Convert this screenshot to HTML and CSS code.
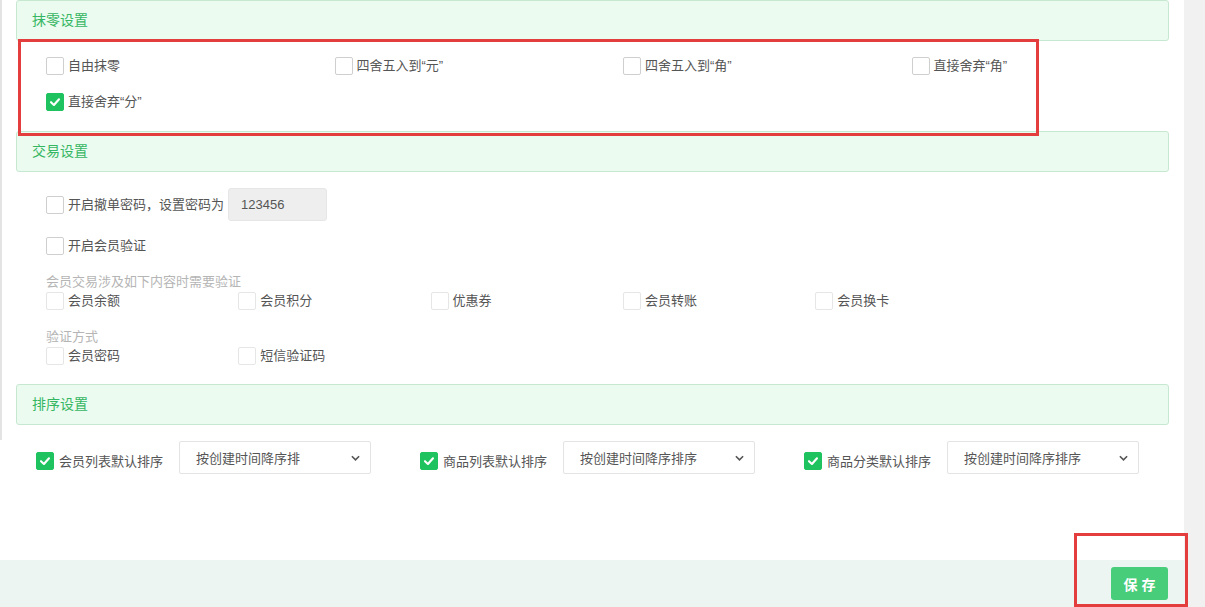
FILE: index.html
```html
<!DOCTYPE html>
<html lang="zh">
<head>
<meta charset="utf-8">
<title>设置</title>
<link rel="stylesheet" href="styles.css">
</head>
<body>
<div class="page">
  <div class="main">
    <div class="panel">
      <div class="sec-head">抹零设置</div>
      <div class="sec-body round">
        <div class="grid4">
          <label class="opt"><span class="cb"></span><span class="txt">自由抹零</span></label>
          <label class="opt"><span class="cb"></span><span class="txt">四舍五入到“元”</span></label>
          <label class="opt"><span class="cb"></span><span class="txt">四舍五入到“角”</span></label>
          <label class="opt"><span class="cb"></span><span class="txt">直接舍弃“角”</span></label>
          <label class="opt"><span class="cb on"><svg viewBox="0 0 18 18"><polyline points="4.5,9.2 7.8,12.3 13.5,6" /></svg></span><span class="txt">直接舍弃“分”</span></label>
        </div>
      </div>

      <div class="sec-head">交易设置</div>
      <div class="sec-body trade">
        <div class="line pwd">
          <label class="opt"><span class="cb"></span><span class="txt">开启撤单密码，设置密码为</span></label>
          <div class="pwd-input">123456</div>
        </div>
        <div class="line verify">
          <label class="opt"><span class="cb"></span><span class="txt">开启会员验证</span></label>
        </div>
        <div class="sub">会员交易涉及如下内容时需要验证</div>
        <div class="grid5">
          <label class="opt dis"><span class="cb"></span><span class="txt">会员余额</span></label>
          <label class="opt dis"><span class="cb"></span><span class="txt">会员积分</span></label>
          <label class="opt dis"><span class="cb"></span><span class="txt">优惠券</span></label>
          <label class="opt dis"><span class="cb"></span><span class="txt">会员转账</span></label>
          <label class="opt dis"><span class="cb"></span><span class="txt">会员换卡</span></label>
        </div>
        <div class="sub sub2">验证方式</div>
        <div class="grid5">
          <label class="opt dis"><span class="cb"></span><span class="txt">会员密码</span></label>
          <label class="opt dis"><span class="cb"></span><span class="txt">短信验证码</span></label>
        </div>
      </div>

      <div class="sec-head">排序设置</div>
    </div>

    <div class="sort-row">
      <div class="sort-group">
        <span class="cb on"><svg viewBox="0 0 18 18"><polyline points="4.5,9.2 7.8,12.3 13.5,6" /></svg></span>
        <span class="sort-label">会员列表默认排序</span>
        <div class="select"><span>按创建时间降序排</span><svg class="chev" viewBox="0 0 10 6"><polyline points="1,1 5,5 9,1" /></svg></div>
      </div>
      <div class="sort-group">
        <span class="cb on"><svg viewBox="0 0 18 18"><polyline points="4.5,9.2 7.8,12.3 13.5,6" /></svg></span>
        <span class="sort-label">商品列表默认排序</span>
        <div class="select"><span>按创建时间降序排序</span><svg class="chev" viewBox="0 0 10 6"><polyline points="1,1 5,5 9,1" /></svg></div>
      </div>
      <div class="sort-group">
        <span class="cb on"><svg viewBox="0 0 18 18"><polyline points="4.5,9.2 7.8,12.3 13.5,6" /></svg></span>
        <span class="sort-label">商品分类默认排序</span>
        <div class="select"><span>按创建时间降序排序</span><svg class="chev" viewBox="0 0 10 6"><polyline points="1,1 5,5 9,1" /></svg></div>
      </div>
    </div>

    <div class="spacer"></div>

    <div class="footer">
      <button class="save">保存</button>
    </div>
  </div>
  <div class="side"></div>

  <div class="mark mark-round"></div>
  <div class="mark mark-save"></div>
</div>
</body>
</html>
```

FILE: styles.css
```css
html, body {
  margin: 0;
  padding: 0;
  background: #fff;
}
body {
  font-family: "Liberation Sans", "Noto Sans CJK SC", sans-serif;
  font-size: 13px;
  color: #555;
}
.page {
  position: relative;
  width: 1205px;
  height: 607px;
  overflow: hidden;
  display: flex;
}
.main {
  width: 1184px;
  height: 607px;
  display: flex;
  flex-direction: column;
}
.side {
  width: 21px;
  background: #f1f1f1;
}
.panel {
  border-left: 2px solid #e3e3e3;
  padding: 0 15px 15px 14px;
}
.sec-head {
  height: 39px;
  line-height: 39px;
  border: 1px solid #c7e8d0;
  border-radius: 3px;
  background: #ebfbf0;
  color: #35b662;
  font-size: 14px;
  padding-left: 15px;
}
.sec-body.round {
  padding: 7px 0 11px 30px;
  height: 72px;
}
.grid4 {
  display: grid;
  grid-template-columns: repeat(4, 288.5px);
  grid-auto-rows: 36px;
}
.grid5 {
  display: grid;
  grid-template-columns: repeat(5, 192.3px);
  padding-left: 0;
  height: 18px;
}
.opt {
  display: flex;
  align-items: center;
  gap: 4px;
  white-space: nowrap;
}
.txt {
  line-height: 18px;
}
.cb {
  box-sizing: border-box;
  width: 18px;
  height: 18px;
  border: 1px solid #cfcfcf;
  border-radius: 2px;
  background: #fff;
  flex: none;
  display: inline-block;
}
.dis .cb {
  border-color: #e6e6e6;
}
.cb.on {
  background: #1ec25f;
  border-color: #1ec25f;
}
.cb svg {
  display: block;
  width: 16px;
  height: 16px;
}
.cb svg polyline {
  fill: none;
  stroke: #fff;
  stroke-width: 2.4;
  stroke-linecap: round;
  stroke-linejoin: round;
}
.sec-body.trade {
  padding: 16px 0 19px 30px;
}
.line.pwd {
  display: flex;
  align-items: center;
  height: 33px;
}
.pwd-input {
  box-sizing: border-box;
  width: 99px;
  height: 33px;
  margin-left: 4px;
  background: #eee;
  border-radius: 3px;
  border: 1px solid #e6e6e6;
  line-height: 31px;
  padding-left: 12px;
  color: #555;
}
.line.verify {
  display: flex;
  height: 20px;
  margin-top: 15px;
}
.sub {
  color: #b5b5b5;
  font-size: 13px;
  line-height: 16px;
  height: 16px;
  margin-top: 18px;
  margin-bottom: 2px;
}
.sub.sub2 {
  margin-top: 19px;
}
.sort-row {
  display: flex;
  gap: 49px;
  padding-left: 36px;
  height: 33px;
  margin-top: 1px;
}
.sort-group {
  display: flex;
  align-items: center;
}
.sort-group .cb {
  margin-top: 6px;
}
.sort-label {
  margin-left: 5px;
  width: 104px;
  margin-top: 6px;
  white-space: nowrap;
}
.select {
  box-sizing: border-box;
  width: 192px;
  height: 33px;
  margin-left: 16px;
  border: 1px solid #e3e3e3;
  border-radius: 2px;
  background: #fff;
  display: flex;
  align-items: center;
  justify-content: space-between;
  padding: 0 10px 0 16px;
  color: #555;
}
.chev {
  width: 9px;
  height: 6px;
}
.chev polyline {
  fill: none;
  stroke: #555;
  stroke-width: 1.8;
}
.spacer {
  flex: 1;
}
.footer {
  height: 47px;
  background: #edf5f2;
  display: flex;
  justify-content: flex-end;
  align-items: flex-start;
  padding-right: 16px;
}
.save {
  margin-top: 7px;
  width: 57px;
  height: 33px;
  border: none;
  border-radius: 3px;
  background: #48cd7b;
  color: #fff;
  font-family: "Noto Sans CJK SC", sans-serif;
  font-size: 14px;
  font-weight: bold;
  letter-spacing: 4px;
  padding: 0 0 0 4px;
}
.mark {
  position: absolute;
  box-sizing: border-box;
  border: 3px solid #e43d3d;
}
.mark-round {
  left: 18px;
  top: 39px;
  width: 1021px;
  height: 97px;
}
.mark-save {
  left: 1074px;
  top: 533px;
  width: 114px;
  height: 74px;
}
```
